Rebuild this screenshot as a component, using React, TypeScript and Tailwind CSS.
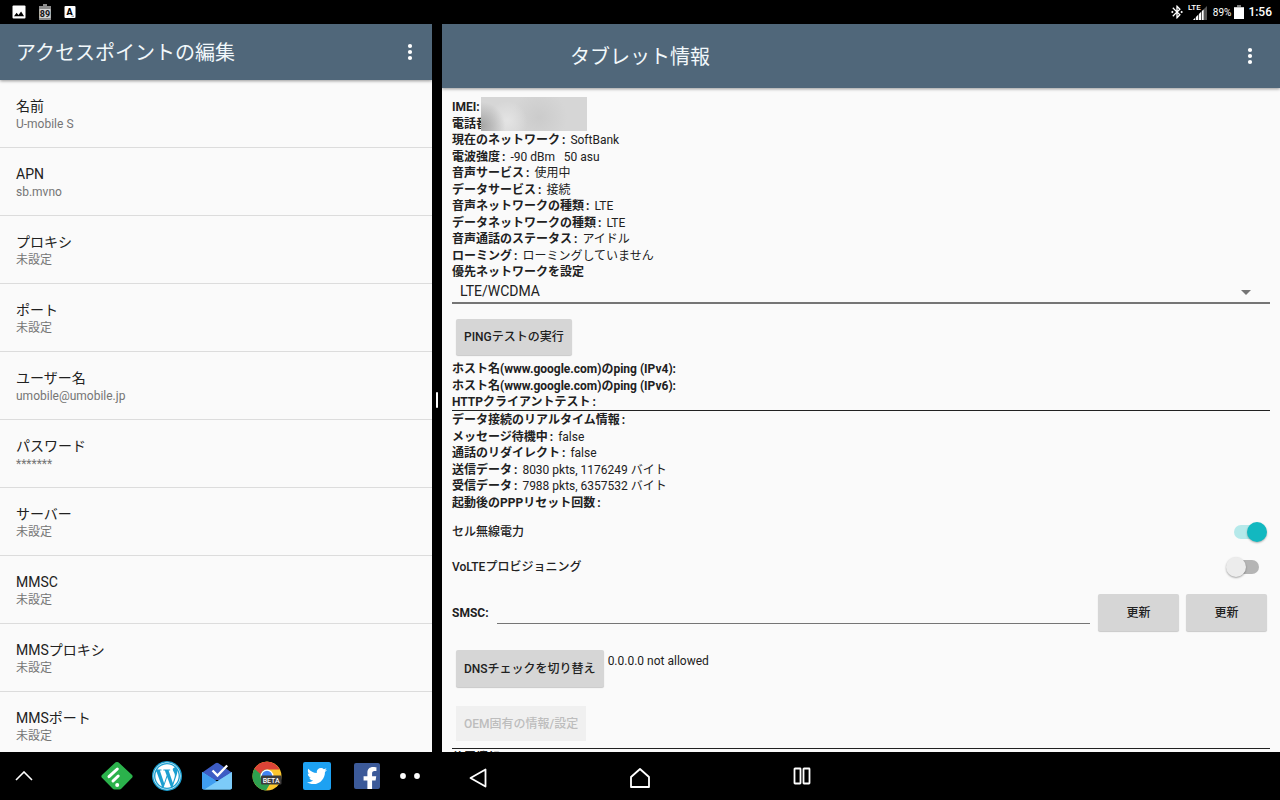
import React from 'react'
import { FaFacebookF, FaTwitter, FaWordpress } from 'react-icons/fa'
import { MdBluetoothConnected } from 'react-icons/md'

const apnFields = [
  { label: '名前', value: 'U-mobile S' },
  { label: 'APN', value: 'sb.mvno' },
  { label: 'プロキシ', value: '未設定' },
  { label: 'ポート', value: '未設定' },
  { label: 'ユーザー名', value: 'umobile@umobile.jp' },
  { label: 'パスワード', value: '*******' },
  { label: 'サーバー', value: '未設定' },
  { label: 'MMSC', value: '未設定' },
  { label: 'MMSプロキシ', value: '未設定' },
  { label: 'MMSポート', value: '未設定' },
]

const radioInfo = [
  { label: '現在のネットワーク', value: 'SoftBank' },
  { label: '電波強度', value: '-90 dBm   50 asu' },
  { label: '音声サービス', value: '使用中' },
  { label: 'データサービス', value: '接続' },
  { label: '音声ネットワークの種類', value: 'LTE' },
  { label: 'データネットワークの種類', value: 'LTE' },
  { label: '音声通話のステータス', value: 'アイドル' },
  { label: 'ローミング', value: 'ローミングしていません' },
]

const dataInfo = [
  { label: 'データ接続のリアルタイム情報', value: '' },
  { label: 'メッセージ待機中', value: 'false' },
  { label: '通話のリダイレクト', value: 'false' },
  { label: '送信データ', value: '8030 pkts, 1176249 バイト' },
  { label: '受信データ', value: '7988 pkts, 6357532 バイト' },
  { label: '起動後のPPPリセット回数', value: '' },
]

interface InfoLineProps {
  label: string
  value?: string
}

const InfoLine = ({ label, value }: InfoLineProps) => (
  <p className="whitespace-pre">
    <span className="font-bold">
      {label}
      <span className="px-0.5">:</span>
    </span>
    {value ? ` ${value}` : ''}
  </p>
)

const MoreButton = () => (
  <button aria-label="その他のオプション" className="flex h-12 w-11 items-center justify-center">
    <svg viewBox="0 0 6 18" className="h-[18px] w-1.5 fill-white">
      <circle cx="3" cy="3" r="2.1" />
      <circle cx="3" cy="9" r="2.1" />
      <circle cx="3" cy="15" r="2.1" />
    </svg>
  </button>
)

const StatusBar = () => (
  <div className="flex h-6 shrink-0 items-center justify-between pr-2 pl-3 text-white">
    <div className="flex items-center gap-3">
      <svg viewBox="0 0 14 14" className="h-3.5 w-3.5">
        <rect x="0.5" y="0.5" width="13" height="13" rx="1" fill="#fff" />
        <path d="M2 11.2l2.6-3.4 1.9 2.1 2.6-3.3 3 4.6z" fill="#000" />
      </svg>
      <svg viewBox="0 0 14 16" className="h-4 w-3.5">
        <path d="M5 0h4v2h4v14H1V2h4z" fill="#8b8b8b" />
        <rect x="1.5" y="5" width="11" height="9" fill="#d4d4d4" />
        <text x="7" y="12.6" textAnchor="middle" fontSize="9" fontWeight="700" fontFamily="Roboto, sans-serif" fill="#111">
          89
        </text>
      </svg>
      <svg viewBox="0 0 12 14" className="h-3.5 w-3">
        <rect x="0.5" y="1" width="11" height="12" rx="1" fill="#fff" />
        <text x="5.5" y="10" textAnchor="middle" fontSize="9" fontWeight="900" fontFamily="Roboto, sans-serif" fill="#000">
          A
        </text>
        <path d="M7.5 11.2h2.5" stroke="#555" strokeWidth="0.8" />
      </svg>
    </div>
    <div className="flex items-center gap-[3px]">
      <MdBluetoothConnected className="h-4 w-4" />
      <svg viewBox="0 0 20 18" className="h-[18px] w-5">
        <text x="0" y="7" fontSize="8" fontWeight="500" fontFamily="Roboto, sans-serif" fill="#fff">
          LTE
        </text>
        <path d="M5 17L19 3v14z" fill="#555" />
        <path d="M5 17l2-2v2zM8 17v-3l2-2v5zM11 17v-6l2-2v8zM14 17V8l1.6-1.6V17z" fill="#fff" />
      </svg>
      <span className="pl-0.5 text-[10px]">89%</span>
      <svg viewBox="0 0 10 14" className="h-3.5 w-2.5">
        <path d="M3 0h4v2h3v12H0V2h3z" fill="#777" />
        <rect y="2.4" width="10" height="11.6" fill="#fff" />
      </svg>
      <span className="pl-px text-xs font-medium">1:56</span>
    </div>
  </div>
)

const ApnPane = () => (
  <section className="flex min-h-0 flex-col overflow-hidden bg-[#fafafa]">
    <header className="z-10 flex h-14 shrink-0 items-center justify-between bg-[#50677a] pl-4 text-[#f2f8fb] shadow-[0_1px_3px_rgba(0,0,0,0.4)]">
      <h1 className="pt-0.5 text-xl">アクセスポイントの編集</h1>
      <MoreButton />
    </header>
    <ul className="min-h-0 flex-1 overflow-hidden">
      {apnFields.map((field) => (
        <li key={field.label} className="border-b border-[#dcdcdc] px-4 pt-4 pb-[15px]">
          <p className="text-sm leading-5 text-[#212121]">{field.label}</p>
          <p className="text-xs leading-4 text-[#757575]">{field.value}</p>
        </li>
      ))}
    </ul>
  </section>
)

const raisedButton =
  'rounded-xs bg-[#d6d6d6] px-2 font-medium shadow-[0_1px_1px_rgba(0,0,0,0.2)]'

const TabletPane = () => (
  <section className="flex min-h-0 flex-col overflow-hidden bg-[#fafafa]">
    <header className="z-10 flex h-16 shrink-0 items-center justify-between bg-[#50677a] pr-2 pl-32 text-[#f2f8fb] shadow-[0_1px_3px_rgba(0,0,0,0.4)]">
      <h1 className="pt-0.5 text-xl">タブレット情報</h1>
      <MoreButton />
    </header>
    <div className="min-h-0 flex-1 overflow-hidden px-2.5 pt-[11px] text-xs leading-4 text-[#212121]">
      <div className="relative flex min-h-[181px] flex-col justify-between">
        <p className="font-bold">IMEI:</p>
        <p className="font-bold">電話番号:</p>
        {radioInfo.map((info) => (
          <InfoLine key={info.label} {...info} />
        ))}
        <label htmlFor="network" className="font-bold">
          優先ネットワークを設定
        </label>
        {/* redacted phone identity */}
        <div className="absolute -top-0.5 left-[29px] h-[34px] w-[106px] bg-[#d6d6d6] bg-[radial-gradient(circle_at_0%_85%,#a4a4a4,transparent_22%),radial-gradient(circle_at_25%_70%,#e4e4e4,transparent_24%),radial-gradient(circle_at_55%_60%,#cbcbcb,transparent_45%)]" />
      </div>

      <div className="relative">
        <select
          id="network"
          className="block h-6 w-full appearance-none border-b-2 border-[#757575] px-2 text-sm leading-5"
        >
          <option>LTE/WCDMA</option>
        </select>
        <svg viewBox="0 0 10 5" className="absolute top-2.5 right-[19px] h-[5px] w-2.5 fill-[#757575]">
          <path d="M0 0h10L5 5z" />
        </svg>
      </div>

      <button className={`${raisedButton} mt-[15px] ml-1 block h-9`}>
        PINGテストの実行
      </button>

      <div className="mt-1.5 flex min-h-[50px] flex-col justify-between border-b border-[#212121] font-bold">
        <p>ホスト名(www.google.com)のping (IPv4):</p>
        <p>ホスト名(www.google.com)のping (IPv6):</p>
        <InfoLine label="HTTPクライアントテスト" />
      </div>
      <div className="mt-px flex min-h-[99px] flex-col justify-between">
        {dataInfo.map((info) => (
          <InfoLine key={info.label} {...info} />
        ))}
      </div>

      <div className="mt-[3px] flex h-[35px] items-center justify-between pr-[3px] font-medium">
        <label htmlFor="radio-power">セル無線電力</label>
        <input
          id="radio-power"
          type="checkbox"
          role="switch"
          defaultChecked
          className="relative h-5 w-[33px] appearance-none before:absolute before:top-[3px] before:left-0 before:h-3.5 before:w-7 before:rounded-full before:bg-[#b5e9ea] after:absolute after:top-0 after:right-0 after:h-5 after:w-5 after:rounded-full after:bg-[#12b8c0] after:shadow-[0_1px_2px_rgba(0,0,0,0.3)]"
        />
      </div>
      <div className="flex h-[35px] items-center justify-between pr-[11px] font-medium">
        <label htmlFor="volte">VoLTEプロビジョニング</label>
        <input
          id="volte"
          type="checkbox"
          role="switch"
          className="relative h-5 w-[33px] appearance-none before:absolute before:top-[3px] before:right-0 before:h-3.5 before:w-7 before:rounded-full before:bg-[#b5b5b5] after:absolute after:top-0 after:left-0 after:h-5 after:w-5 after:rounded-full after:bg-[#ececec] after:shadow-[0_1px_2px_rgba(0,0,0,0.35)]"
        />
      </div>

      <div className="mt-2.5 flex items-center pr-[3px]">
        <label htmlFor="smsc" className="font-bold">
          SMSC:
        </label>
        <input
          id="smsc"
          type="text"
          className="mr-2 mb-[7px] ml-2 h-[30px] min-w-0 flex-1 self-end border-b border-[#757575]"
        />
        <button className={`${raisedButton} h-[37px] w-[81px]`}>更新</button>
        <button className={`${raisedButton} ml-[7px] h-[37px] w-[81px]`}>
          更新
        </button>
      </div>

      <div className="mt-[19px] ml-1 flex gap-1">
        <button className={`${raisedButton} h-[37px]`}>
          DNSチェックを切り替え
        </button>
        <p className="pt-[3px]">0.0.0.0 not allowed</p>
      </div>

      <button
        disabled
        className="mt-[19px] ml-1 block h-[35px] bg-[#f0f0f0] px-2 font-medium text-[#bdbdbd]"
      >
        OEM固有の情報/設定
      </button>
      <div className="mt-[7px] border-t border-[#212121] pt-px">
        <InfoLine label="位置情報" />
      </div>
    </div>
  </section>
)

const FeedlyIcon = () => (
  <svg viewBox="0 0 32 28" className="h-7 w-8">
    <path d="M13.5 1.2a3.6 3.6 0 0 1 5 0L30.8 12.7a2.4 2.4 0 0 1 0 3.4L20.5 26.6a3 3 0 0 1-2 .9h-5a3 3 0 0 1-2-.9L1.2 16.1a2.4 2.4 0 0 1 0-3.4z" fill="#2bb24c" />
    <path d="M8 14.7l8.3-7.7M12 19l5.2-5" stroke="#fff" strokeWidth="3" strokeLinecap="round" />
    <circle cx="16.2" cy="23" r="2" fill="#fff" />
  </svg>
)

const InboxIcon = () => (
  <svg viewBox="0 0 30 28" className="h-7 w-[30px]">
    <path d="M1 10L13.5 1.2a2.6 2.6 0 0 1 3 0L29 10v8H1z" fill="#3d5cc4" />
    <path d="M0 10l15 9.5L30 10v15.5a2 2 0 0 1-2 2H2a2 2 0 0 1-2-2z" fill="#5fbcf5" />
    <path d="M0 10l15 9.5-12.5 8H2a2 2 0 0 1-2-2z" fill="#3f9df0" />
    <path d="M30 10v15.5a2 2 0 0 1-2 2H2.5z" fill="#7ccbf9" />
    <path d="M10.5 8.5l5 5L25.2 3.5" stroke="#fff" strokeWidth="2.4" fill="none" />
  </svg>
)

const ChromeBetaIcon = () => (
  <svg viewBox="0 0 30 30" className="h-[30px] w-[30px]">
    <circle cx="15" cy="15" r="14.5" fill="#fbc62d" />
    <path d="M2.4 7.8A14.5 14.5 0 0 0 14 29.5L20.6 18.3 15 15 15 8.5z" fill="#2ea04f" />
    <path d="M2.4 7.8A14.5 14.5 0 0 1 27.6 8.5H15a6.5 6.5 0 0 0-6.3 4.8z" fill="#dc4437" />
    <circle cx="15" cy="15" r="6.5" fill="#fff" />
    <circle cx="15" cy="15" r="5.2" fill="#4285f4" />
    <rect x="9" y="14.5" width="20.5" height="9" rx="1" fill="#3c3c3c" />
    <text x="19.2" y="21.6" textAnchor="middle" fontSize="7" fontWeight="500" fontFamily="Roboto, sans-serif" fill="#fff">
      BETA
    </text>
  </svg>
)

const dockApps = [
  { name: 'Feedly', icon: <FeedlyIcon /> },
  {
    name: 'WordPress',
    icon: (
      <span className="flex h-[30px] w-[30px] items-center justify-center rounded-full bg-[#1c9fd0]">
        <FaWordpress className="h-7 w-7 text-white" />
      </span>
    ),
  },
  { name: 'Inbox', icon: <InboxIcon /> },
  { name: 'Chrome Beta', icon: <ChromeBetaIcon /> },
  {
    name: 'Twitter',
    icon: (
      <span className="flex h-7 w-7 items-center justify-center rounded-xs bg-[#1da1f2]">
        <FaTwitter className="h-5 w-5 text-white" />
      </span>
    ),
  },
  {
    name: 'Facebook',
    icon: (
      <span className="flex h-[26px] w-[26px] items-end justify-end overflow-hidden rounded-xs bg-[#3c5a99] pr-0.5">
        <FaFacebookF className="-mb-0.5 h-6 w-4 text-white" />
      </span>
    ),
  },
]

const NavBar = () => (
  <nav className="grid h-12 shrink-0 grid-cols-[1fr_auto_1fr] items-center">
    <div className="flex items-center">
      <button aria-label="アプリ一覧" className="flex h-12 w-12 items-center justify-center">
        <svg viewBox="0 0 18 10" className="h-2.5 w-[18px]" fill="none" stroke="#fff" strokeWidth="1.6">
          <path d="M1 9l8-8 8 8" />
        </svg>
      </button>
      <div className="ml-11 flex">
        {dockApps.map((app) => (
          <button key={app.name} aria-label={app.name} className="flex h-12 w-[50px] items-center justify-center">
            {app.icon}
          </button>
        ))}
      </div>
      <button aria-label="その他のアプリ" className="flex h-12 w-9 items-center justify-center">
        <svg viewBox="0 0 20 6" className="h-1.5 w-5 fill-white">
          <circle cx="3" cy="3" r="2.9" />
          <circle cx="17" cy="3" r="2.9" />
        </svg>
      </button>
    </div>
    <div className="flex gap-[114px]">
      <button aria-label="戻る" className="flex h-12 w-12 items-center justify-center pt-1">
        <svg viewBox="0 0 18 20" className="h-5 w-[18px]" fill="none" stroke="#fff" strokeWidth="1.8" strokeLinejoin="round">
          <path d="M16.5 1.5v17L1.5 10z" />
        </svg>
      </button>
      <button aria-label="ホーム" className="flex h-12 w-12 items-center justify-center pt-1">
        <svg viewBox="0 0 20 20" className="h-5 w-5" fill="none" stroke="#fff" strokeWidth="1.8" strokeLinejoin="round">
          <path d="M10 1l9 8v10H1V9z" />
        </svg>
      </button>
      <button aria-label="履歴" className="flex h-12 w-12 items-center justify-center">
        <svg viewBox="0 0 18 18" className="h-[18px] w-[18px]" fill="none" stroke="#fff" strokeWidth="1.8">
          <rect x="1.5" y="1.5" width="6" height="15" rx="0.5" />
          <rect x="10.5" y="1.5" width="6" height="15" rx="0.5" />
        </svg>
      </button>
    </div>
  </nav>
)

const App = () => {
  return (
    <div
      lang="ja"
      className="flex h-screen flex-col overflow-hidden bg-black font-[Roboto,'Noto_Sans_CJK_JP',sans-serif]"
    >
      <StatusBar />
      <main className="grid min-h-0 flex-1 grid-cols-[432fr_10px_838fr] grid-rows-1">
        <ApnPane />
        <div className="flex items-center justify-center pt-6">
          <div className="h-4 w-0.5 rounded-full bg-white" />
        </div>
        <TabletPane />
      </main>
      <NavBar />
    </div>
  )
}

export default App
